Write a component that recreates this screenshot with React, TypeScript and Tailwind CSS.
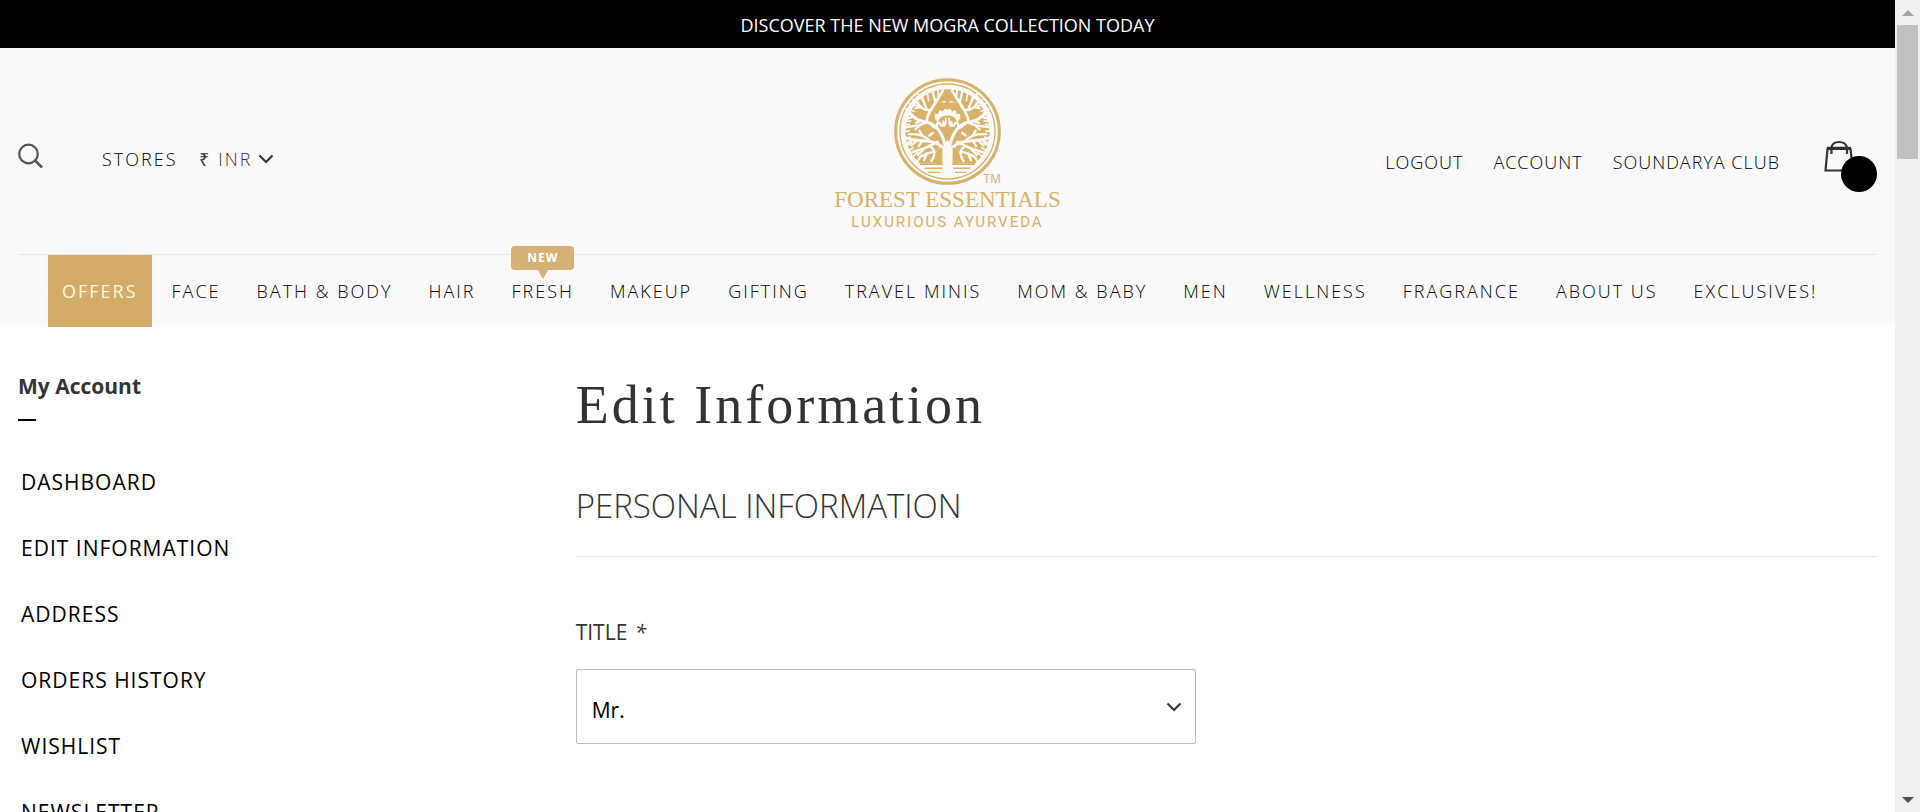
import React from "react";

const MENU = ["FACE", "BATH & BODY", "HAIR", "FRESH", "MAKEUP", "GIFTING", "TRAVEL MINIS", "MOM & BABY", "MEN", "WELLNESS", "FRAGRANCE", "ABOUT US", "EXCLUSIVES!"];
const ACCOUNT_LINKS = ["DASHBOARD", "EDIT INFORMATION", "ADDRESS", "ORDERS HISTORY", "WISHLIST", "NEWSLETTER"];

// Right half of the emblem's foliage; the left half is its mirror image.
function Foliage() {
  return (
    <g>
      <g fill="none" stroke="#fbf9fb" strokeWidth="9" strokeLinecap="round">
        <path d="M5 58 C8 22 26 -22 62 -28 C84 -30 104 -42 116 -60" />
        <path d="M4 60 C22 34 48 30 72 28 C96 26 114 24 134 16" />
        <path d="M30 31 C52 40 62 52 88 56 L116 66" strokeWidth="8" />
        <path d="M62 -28 C64 -50 48 -66 36 -86 L14 -122" strokeWidth="8" />
        <path d="M36 -86 L46 -126" strokeWidth="7" />
        <path d="M50 -64 C70 -62 78 -70 96 -92 M62 -66 L78 -106 M80 -73 L96 -70" strokeWidth="7" />
        <path d="M62 -28 C84 -14 102 -18 126 -12 M82 -20 L96 -6 M78 -32 L94 -26 M100 -45 L122 -38 M56 -26 L40 -12 M34 -10 L30 -26" strokeWidth="7" />
        <path d="M52 29 C68 12 82 8 116 8 M76 11 L84 -2 M92 27 L108 42 M76 29 L86 44 M100 24 L118 34 M54 12 L44 4" strokeWidth="7" />
        <path d="M52 44 C36 56 34 66 48 88 M44 62 L62 66 L70 86 M62 66 L84 78 M72 54 L88 70 M20 50 L30 60" strokeWidth="7" />
      </g>
      <path
        d="M27 -104 L30 -134 M56 -90 L62 -126 M72 -90 L90 -114 M84 -86 L106 -96 M88 -76 L116 -84 M98 -60 L126 -68 M104 -50 L132 -50 M108 -32 L136 -30 M112 -22 L136 -18 M112 -2 L136 0 M110 16 L136 28 M106 34 L132 46 M100 48 L124 60 M88 62 L112 82 M76 70 L94 96"
        fill="none"
        stroke="#fbf9fb"
        strokeWidth="5"
      />
    </g>
  );
}

// Arches, finial and diamond in the middle of the crown.
function Crown() {
  return (
    <g>
      <path d="M-38 -40 C-40 -78 -26 -92 0 -92 C26 -92 40 -78 38 -40 L20 -14 H-20 Z" fill="#fbf9fb" />
      <path d="M0 -114 L7 -102 L18 -96 L6 -92 L6 -87 L30 -87 L40 -70 L38 -52 L28 -52 L24 -64 L14 -60 L8 -68 L0 -65 L-8 -68 L-14 -60 L-24 -64 L-28 -52 L-38 -52 L-40 -70 L-30 -87 L-6 -87 L-6 -92 L-18 -96 L-7 -102 Z" fill="#d8b268" />
      <path d="M-28 -28 C-24 -42 -16 -48 0 -48 C16 -48 24 -42 28 -28 L22 -30 L18 -20 L13 -34 L8 -28 L7 -42 H3 V-24 L12 -4 L0 20 L-12 -4 L-3 -24 V-42 H-7 L-8 -28 L-13 -34 L-18 -20 L-22 -30 Z" fill="#d8b268" />
    </g>
  );
}

function Emblem() {
  return (
    <svg viewBox="-160 -160 320 320" className="block size-[107px]" aria-hidden="true">
      <circle r="155" fill="none" stroke="#d8b268" strokeWidth="9" />
      <circle r="142" fill="none" stroke="#d8b268" strokeWidth="4" />
      <path d="M-82 96 C-106 76 -124 46 -126 4 C-124 -34 -112 -66 -88 -92 C-60 -116 -34 -126 0 -126 C34 -126 60 -116 88 -92 C112 -66 124 -34 126 4 C124 46 106 76 82 96 Z" fill="#d8b268" />
      <Foliage />
      <g transform="scale(-1 1)">
        <Foliage />
      </g>
      <Crown />
      <path d="M0 24 C-6 36 -14 44 -16 60 L-15 98 L-22 136 H22 L15 98 L16 60 C14 44 6 36 0 24 Z" fill="#fbf9fb" />
      <path d="M-36 88 C-40 62 -28 50 -16 48 L-16 98 L-34 98 Z M36 88 C40 62 28 50 16 48 L16 98 L34 98 Z" fill="#d8b268" />
      <path d="M-82 98 H-14 M14 98 H82 M-68 110 H-16 M16 110 H68 M-58 122 L-22 122 M22 122 L58 122" stroke="#d8b268" strokeWidth="4" />
    </svg>
  );
}

function Chevron({ className }: { className: string }) {
  return (
    <svg viewBox="0 0 16 10" className={className} fill="none" stroke="currentColor" strokeWidth="2" aria-hidden="true">
      <path d="M1.5 1.5 L8 8 L14.5 1.5" />
    </svg>
  );
}

function Header() {
  return (
    <header className="bg-[#fbf9fb] px-[18px]">
      <div className="grid h-[207px] grid-cols-[1fr_auto_1fr] items-start border-b border-[#e8e6e8]">
        <div className="flex items-start pt-[95px]">
          <button type="button" aria-label="Search" className="mr-[59px]">
            <svg viewBox="0 0 25 25" className="size-[25px]" fill="none" stroke="#555" strokeWidth="2.2" aria-hidden="true">
              <circle cx="10.5" cy="11" r="9.3" />
              <path d="M17 17.5 L24 24.5" strokeWidth="2.6" />
            </svg>
          </button>
          <a href="#stores" className="mt-1 text-lg leading-6 font-light tracking-[2px] text-black">STORES</a>
          <button type="button" className="mt-1 ml-[22px] flex items-center text-lg leading-6 font-light tracking-[2px] text-[#333]">
            ₹ INR
            <Chevron className="ml-1.5 h-[10px] w-4" />
          </button>
        </div>
        <a href="#home" className="flex flex-col items-center pt-[30px] text-[#d8b268]">
          <span className="relative">
            <Emblem />
            <span className="absolute right-0 bottom-0 text-xs leading-3">TM</span>
          </span>
          <span className="mt-px font-['Liberation_Serif',serif] text-[23px] leading-7">FOREST ESSENTIALS</span>
          <span className="font-['Roboto',sans-serif] text-[15px] leading-4 tracking-[2px]">LUXURIOUS AYURVEDA</span>
        </a>
        <div className="flex items-start justify-end pt-[92px]">
          <nav aria-label="Account" className="mt-[10px] mr-[44px] flex gap-[30px] text-lg leading-6 font-light tracking-[1px] text-black">
            <a href="#logout">LOGOUT</a>
            <a href="#account">ACCOUNT</a>
            <a href="#club">SOUNDARYA CLUB</a>
          </nav>
          <button type="button" aria-label="Bag" className="relative flex h-[52px] w-[53px] items-start">
            <svg viewBox="0 0 30 32" className="h-8 w-[30px]" fill="none" stroke="#333" strokeWidth="2.2" aria-hidden="true">
              <path d="M3.5 9 H26.5 L29 30.5 H1.5 Z" />
              <path d="M3 7.5 H27" strokeWidth="1.5" />
              <path d="M7.5 14 V8 C8 0 22 0 23 8 V14" />
            </svg>
            <span className="absolute right-0 bottom-0 size-9 rounded-full bg-black" />
          </button>
        </div>
      </div>
      <nav aria-label="Shop" className="ml-[30px] flex h-[72px] text-lg leading-6 font-light tracking-[2px] whitespace-nowrap text-black">
        <a href="#offers" className="flex items-center bg-[#d3ac67] px-[14px] font-normal text-[#fff6e0]">OFFERS</a>
        <ul className="flex items-center gap-[36px] pl-[20px]">
          {MENU.map((name) => (
            <li key={name} className="relative">
              <a href="#shop">{name}</a>
              {name === "FRESH" && (
                <span className="absolute bottom-full left-0 flex w-full flex-col items-center">
                  <span className="w-full rounded bg-[#d5b173] text-center text-xs leading-6 font-bold tracking-[1px] text-white">NEW</span>
                  <svg viewBox="0 0 10 9" className="h-[9px] w-[10px]" aria-hidden="true">
                    <path d="M0 0 H10 L5 9 Z" fill="#d5b173" />
                  </svg>
                </span>
              )}
            </li>
          ))}
        </ul>
      </nav>
    </header>
  );
}

function Field({ id, label, children }: { id: string; label: string; children: React.ReactNode }) {
  return (
    <div>
      <label htmlFor={id} className="mb-[22px] block text-[21px] leading-[30px] text-[#333]">
        {label} <em className="ml-0.5">*</em>
      </label>
      {children}
    </div>
  );
}

const inputClass = "block h-[75px] w-full appearance-none rounded-[2px] border border-[#bbb] bg-white px-[15px] pt-2 text-[21px] text-black";

function ScrollBar() {
  return (
    <div aria-hidden="true" className="flex w-[25px] shrink-0 flex-col items-center bg-[#f0f0f0]">
      <div className="flex h-[25px] items-center">
        <svg viewBox="0 0 12 6" className="h-[6px] w-[12px]"><path d="M6 0 L12 6 H0 Z" fill="#a3a3a3" /></svg>
      </div>
      <div className="h-[134px] w-[21px] bg-[#c1c1c1]" />
      <div className="mt-auto flex h-[25px] items-center">
        <svg viewBox="0 0 12 6" className="h-[6px] w-[12px]"><path d="M0 0 H12 L6 6 Z" fill="#505050" /></svg>
      </div>
    </div>
  );
}

export default function App() {
  return (
    <div className="flex h-screen bg-white font-['Open_Sans',sans-serif]">
      <div className="min-w-0 flex-1 overflow-hidden">
        <div className="bg-black pt-[2px] text-center text-lg leading-[46px] font-medium text-white">DISCOVER THE NEW MOGRA COLLECTION TODAY</div>
        <Header />
        <div className="flex px-[18px]">
          <aside className="w-[30%] shrink-0 pt-[44px]">
            <h2 className="text-[21px] leading-[30px] font-bold text-[#333]">My Account</h2>
            <div className="mt-[18px] h-0.5 w-[18px] bg-black" />
            <ul className="mt-[28px] pl-[3px]">
              {ACCOUNT_LINKS.map((name) => (
                <li key={name} className="flex h-[66px] items-center text-[21px] leading-[30px] tracking-[1px] text-black">
                  <a href="#section">{name}</a>
                </li>
              ))}
            </ul>
          </aside>
          <main className="min-w-0 flex-1 pt-[48px] text-[#333]">
            <h1 className="font-['Liberation_Serif',serif] text-[54px] leading-[60px] tracking-[3px]">Edit Information</h1>
            <form>
              <h2 className="mt-[48px] border-b border-[#e5e5e5] pb-[27px] text-[33px] leading-[46px] font-light">PERSONAL INFORMATION</h2>
              <div className="mt-[60px] grid grid-cols-2 gap-x-[60px] gap-y-[62px]">
                <Field id="title" label="TITLE">
                  <div className="relative">
                    <select id="title" className={inputClass} defaultValue="Mr.">
                      <option>Mr.</option>
                      <option>Mrs.</option>
                      <option>Ms.</option>
                    </select>
                    <Chevron className="pointer-events-none absolute top-[33px] right-[14px] h-[10px] w-4" />
                  </div>
                </Field>
                <div className="col-start-1">
                  <Field id="first" label="FIRST NAME">
                    <input id="first" className={inputClass} />
                  </Field>
                </div>
                <Field id="last" label="LAST NAME">
                  <input id="last" className={inputClass} />
                </Field>
              </div>
            </form>
          </main>
        </div>
      </div>
      <ScrollBar />
    </div>
  );
}
